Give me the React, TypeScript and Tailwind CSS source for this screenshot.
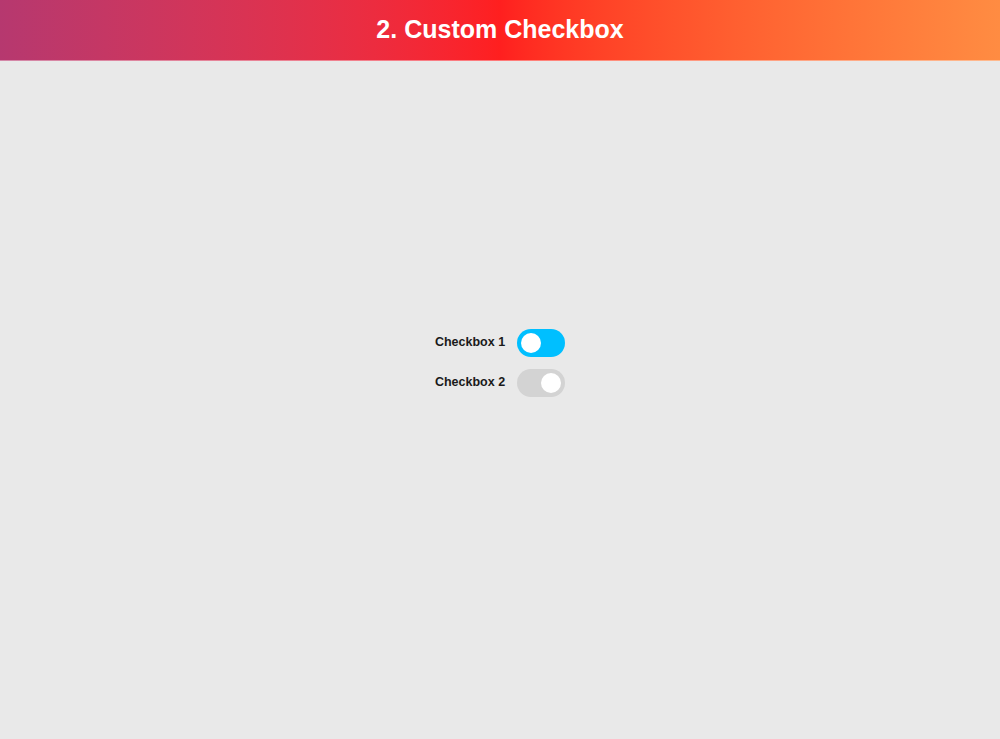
import { useState } from "react"

function Toggle({ checked, onChange }: { checked: boolean; onChange: () => void }) {
  return (
    <button
      type="button"
      role="switch"
      aria-checked={checked}
      onClick={onChange}
      className={`relative h-[28px] w-[48px] shrink-0 rounded-full transition-colors ${
        checked ? "bg-[#00bfff]" : "bg-[#d3d3d3]"
      }`}
    >
      <span
        className={`absolute top-[4px] h-[20px] w-[20px] rounded-full bg-white transition-all ${
          checked ? "left-[4px]" : "left-[24px]"
        }`}
      />
    </button>
  )
}

export default function App() {
  const [boxes, setBoxes] = useState([true, false])

  const flip = (i: number) => setBoxes((b) => b.map((v, j) => (j === i ? !v : v)))

  return (
    <div className="min-h-[739px] bg-[#e9e9e9] font-['Liberation_Sans',Arial,sans-serif]">
      <header className="flex h-[61px] items-center justify-center border-b border-white/40 bg-gradient-to-r from-[#b6386f] via-[#ff1f1f] to-[#ff8c42]">
        <h1 className="text-[25px] font-bold text-white">2. Custom Checkbox</h1>
      </header>

      <main className="flex flex-col items-center gap-[12px] pt-[268px]">
        {boxes.map((on, i) => (
          <label key={i} className="flex items-center gap-[12px]">
            <span className="text-[12.5px] font-bold text-[#1a1a1a] -translate-y-px">Checkbox {i + 1}</span>
            <Toggle checked={on} onChange={() => flip(i)} />
          </label>
        ))}
      </main>
    </div>
  )
}
